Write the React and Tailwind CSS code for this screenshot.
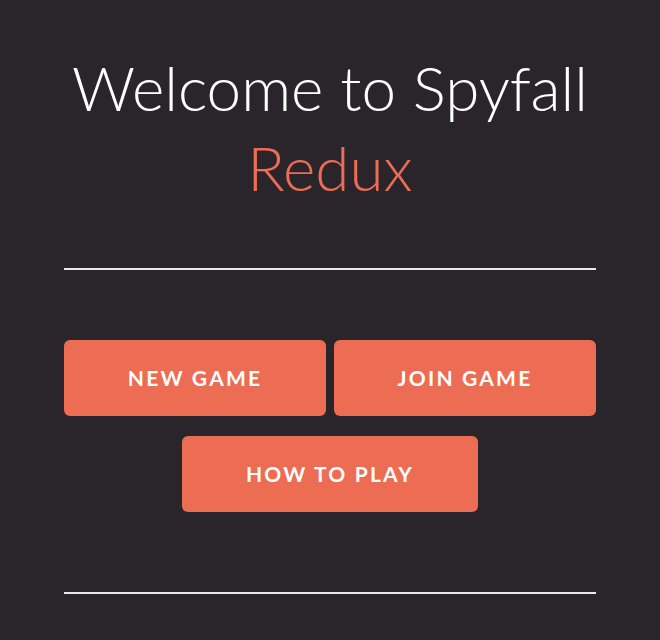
export default function App() {
  return (
    <div
      className="min-h-screen bg-[#2a252b] text-white"
      style={{ fontFamily: "Lato, 'Open Sans', sans-serif" }}
    >
      <div className="w-[532px] mx-auto pt-[47px]">
        <h1 className="text-center font-light text-[62px] leading-[80px]">
          Welcome to Spyfall
          <br />
          <span className="text-[#ed6c54]">Redux</span>
        </h1>
        <hr className="mt-[61px] border-0 h-[2px] bg-[#e8e6e8]" />
        <div className="mt-[70px] flex flex-col items-center gap-5">
          <div className="flex w-full gap-2">
            <button className="flex-1 h-[76px] rounded-md bg-[#ed6c54] text-white font-bold text-[21px] tracking-[2.2px]">
              NEW GAME
            </button>
            <button className="flex-1 h-[76px] rounded-md bg-[#ed6c54] text-white font-bold text-[21px] tracking-[2.2px]">
              JOIN GAME
            </button>
          </div>
          <button className="w-[296px] h-[76px] rounded-md bg-[#ed6c54] text-white font-bold text-[21px] tracking-[2.2px]">
            HOW TO PLAY
          </button>
        </div>
        <hr className="mt-[80px] border-0 h-[2px] bg-[#e8e6e8]" />
      </div>
    </div>
  );
}
